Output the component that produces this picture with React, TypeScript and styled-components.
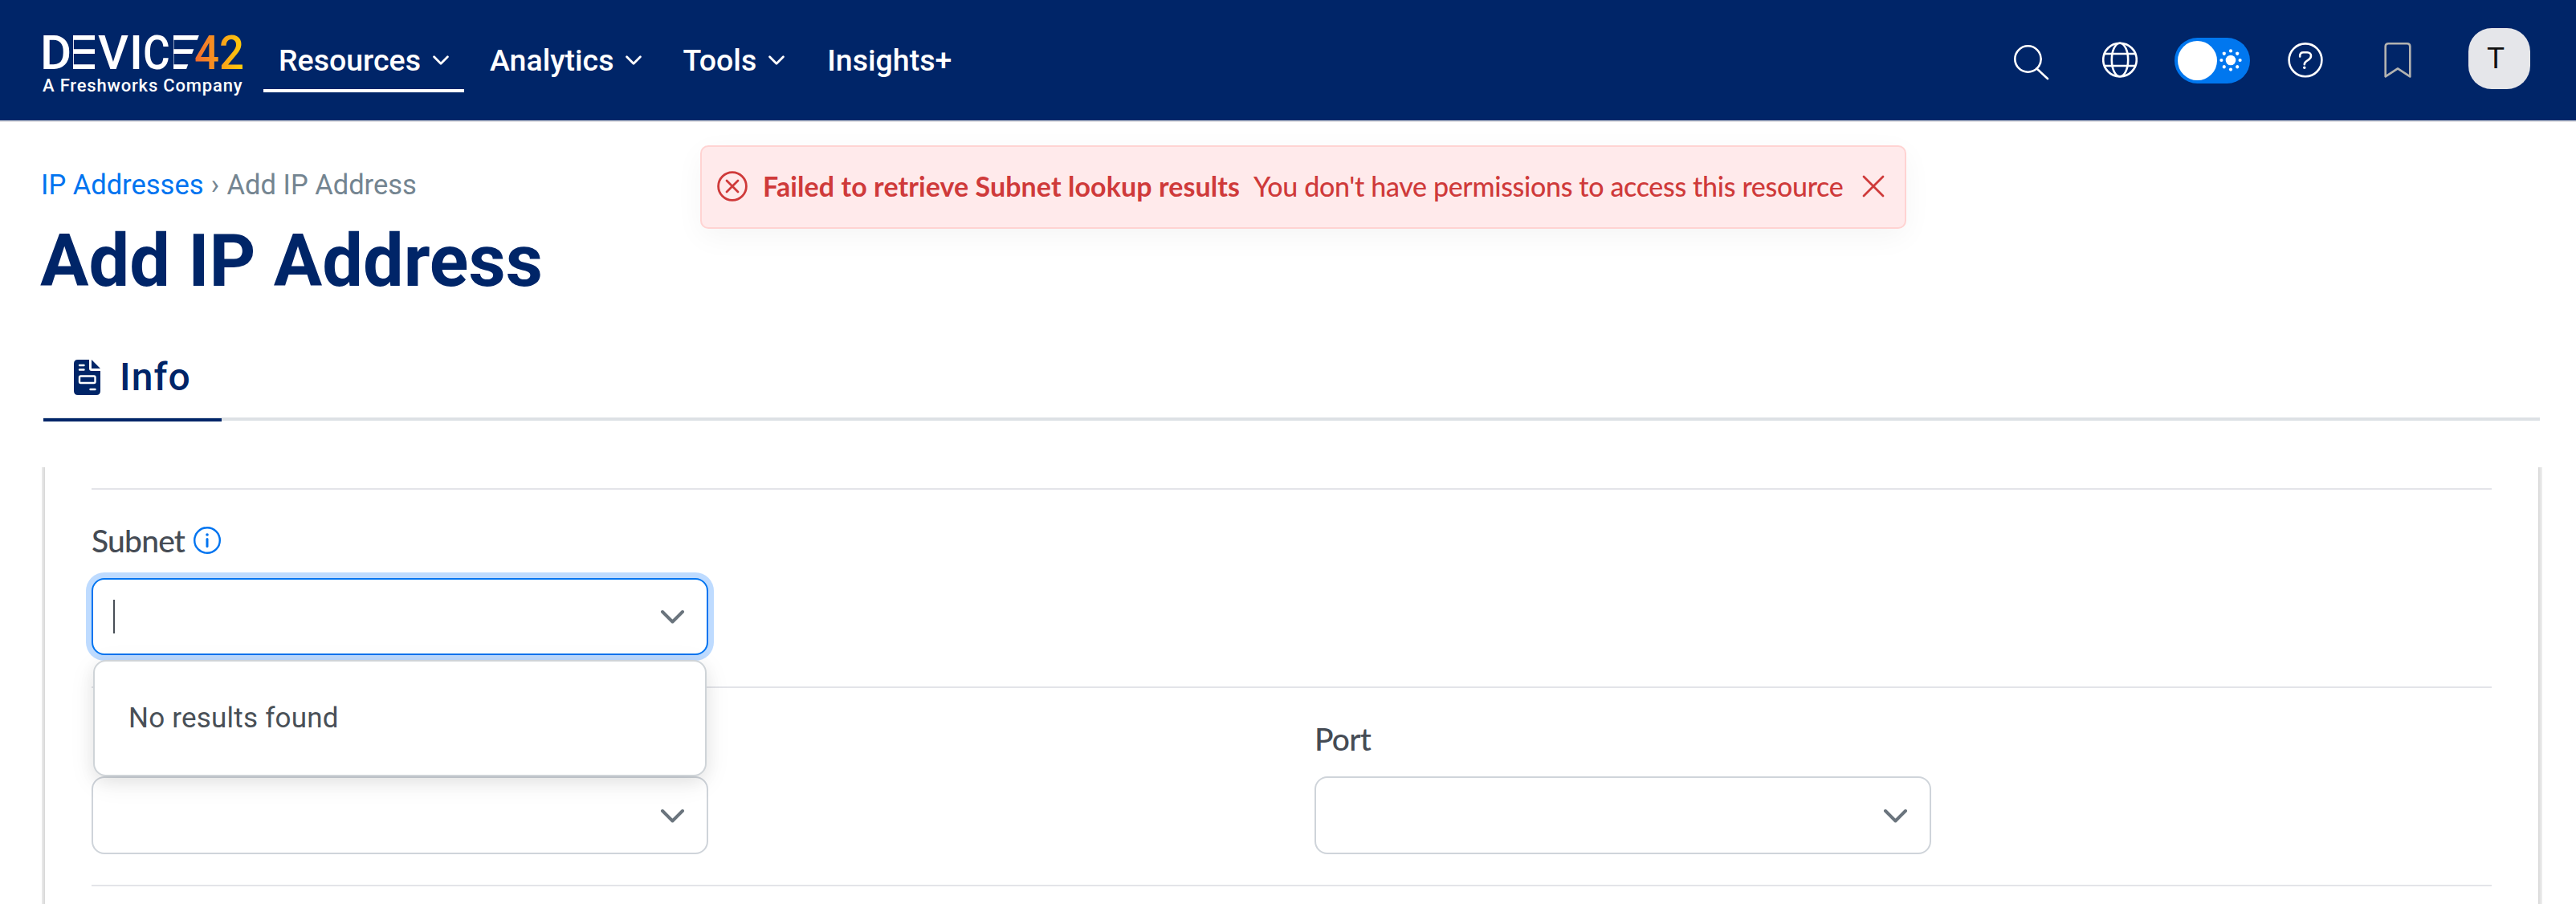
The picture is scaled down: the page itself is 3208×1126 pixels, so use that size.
import React from "react";
import styled, { createGlobalStyle, css } from "styled-components";

const navy = "#002568";
const blue = "#0074f0";
const red = "#cf3a3a";

const GlobalStyle = createGlobalStyle`
  * { box-sizing: border-box; }
  body { margin: 0; background: #fff; font-family: Roboto, "Liberation Sans", sans-serif; }
`;

const Page = styled.div`
  position: relative;
  height: 1126px;
  overflow: hidden;
`;

const Header = styled.header`
  display: flex;
  height: 152px;
  padding: 0 57px 0 52px;
  background: ${navy};
  border-bottom: 2px solid #e0e0e4;
`;

const Brand = styled.div`
  display: flex;
  flex-direction: column;
  width: 276px;
  padding-top: 41px;
`;

const Wordmark = styled.svg`
  display: block;
  width: 252px;
  height: 48px;
  overflow: visible;
  font: 500 60px Roboto, sans-serif;
  fill: #fff;
`;

const Tagline = styled.span`
  margin: 5px 0 0 1px;
  font-size: 22px;
  font-weight: 500;
  line-height: 26px;
  letter-spacing: 0.82px;
  color: #fff;
  white-space: nowrap;
`;

const Nav = styled.nav`
  display: flex;
  gap: 13px;
  padding-top: 39px;
`;

const NavItem = styled.a<{ $active?: boolean }>`
  display: flex;
  align-items: center;
  gap: 15px;
  height: 76px;
  padding: 0 19px 0 19px;
  border-bottom: 4px solid ${(p) => (p.$active ? "#fff" : "transparent")};
  color: #fff;
  font-size: 37.5px;
  font-weight: 500;
  white-space: nowrap;

  &:last-child {
    padding-left: 21px;
  }
`;

const Tools = styled.div`
  display: flex;
  align-items: center;
  height: 150px;
  margin-left: auto;
`;

const ToolIcon = styled.svg<{ $w: number; $gap: number }>`
  flex: none;
  width: ${(p) => p.$w}px;
  height: 60px;
  margin-right: ${(p) => p.$gap}px;
  fill: none;
  stroke: #fff;
  stroke-width: 2.6;
  stroke-linecap: round;
  stroke-linejoin: round;
`;

const ThemeSwitch = styled.div`
  display: flex;
  align-items: center;
  justify-content: space-between;
  width: 94px;
  height: 57px;
  margin-right: 47px;
  padding: 0 9px 0 4px;
  border-radius: 29px;
  background: #0077ef;
`;

const Knob = styled.span`
  width: 49px;
  height: 49px;
  border-radius: 50%;
  background: #fff;
`;

const Avatar = styled.div`
  display: flex;
  align-items: center;
  justify-content: center;
  width: 77px;
  height: 76px;
  margin-bottom: 4px;
  padding: 0 9px 2px 0;
  border-radius: 29px;
  background: #e5e6ea;
  color: #111;
  font-size: 37px;
`;

const Heading = styled.div`
  padding: 56px 51px 0;
`;

const Breadcrumb = styled.div`
  display: flex;
  font-size: 34.5px;
  line-height: 44px;
  color: #748591;
`;

const CrumbLink = styled.a`
  color: ${blue};
`;

const CrumbSep = styled.span`
  width: 29px;
  text-align: center;
`;

const Title = styled.h1`
  margin: 24px 0 0 -1px;
  font-size: 90px;
  font-weight: 700;
  line-height: 100px;
  color: ${navy};
`;

const TabBar = styled.div`
  display: flex;
  height: 124px;
  margin: 24px 45px 0 54px;
  border-bottom: 4px solid #dde1e5;
`;

const Tab = styled.div`
  display: flex;
  align-items: center;
  gap: 24px;
  width: 222px;
  height: 125px;
  padding: 18px 0 0 38px;
  border-bottom: 4px solid ${navy};
  color: ${navy};
  font-size: 48px;
  font-weight: 500;
  letter-spacing: 1.1px;
`;

const Viewport = styled.div`
  height: 544px;
  margin: 58px 42px 0 52px;
  overflow: hidden;
`;

const Panel = styled.div`
  height: 680px;
  margin: -20px 5px 0 4px;
  padding: 46px 58px 0;
  background: #fff;
  box-shadow: 0 0 11px rgba(0, 0, 0, 0.32);
`;

const Section = styled.section`
  display: grid;
  grid-template-columns: 1523px 1fr;
  height: 247px;
  padding-top: 38px;
  border-top: 2px solid #e3e4e9;
`;

const Field = styled.div`
  position: relative;
  width: 768px;
`;

const Label = styled.label`
  display: flex;
  align-items: center;
  gap: 10px;
  height: 50px;
  margin-bottom: 22px;
  font-family: Lato, "Liberation Sans", sans-serif;
  font-size: 39px;
  font-weight: 500;
  line-height: 50px;
  letter-spacing: -0.8px;
  color: #454b54;
`;

const Select = styled.div<{ $focused?: boolean }>`
  display: flex;
  align-items: center;
  height: 97px;
  padding: 0 26px 0 25px;
  border: 2px solid #cfd4da;
  border-radius: 16px;
  background: #fff;
  ${(p) =>
    p.$focused &&
    css`
      height: 96px;
      border-color: ${blue};
      box-shadow: 0 0 0 7px #bedbff;
    `}
`;

const Caret = styled.span`
  width: 2px;
  height: 42px;
  background: #484f57;
`;

const Arrow = styled.svg`
  width: 33px;
  height: 22px;
  margin-left: auto;
  fill: none;
  stroke: #6a747d;
  stroke-width: 4;
  stroke-linecap: round;
  stroke-linejoin: round;
`;

const Menu = styled.div`
  position: absolute;
  z-index: 2;
  top: 174px;
  left: 2px;
  display: flex;
  align-items: center;
  width: 764px;
  height: 145px;
  padding-left: 42px;
  border: 2px solid #cfd4d8;
  border-radius: 16px;
  background: #fff;
  box-shadow: 0 8px 32px rgba(0, 0, 0, 0.08), 0 6px 20px rgba(0, 0, 0, 0.06);
  color: #495057;
  font-size: 35px;
  letter-spacing: 0.22px;
`;

const Toast = styled.div`
  position: absolute;
  z-index: 3;
  top: 181px;
  left: 872px;
  display: flex;
  align-items: center;
  width: 1502px;
  height: 104px;
  padding: 0 25px 3px 19px;
  border: 2px solid #ffd3d2;
  border-radius: 10px;
  background: #ffeaeb;
  box-shadow: 0 10px 36px rgba(0, 0, 0, 0.045);
  color: ${red};
  font-family: Lato, "Liberation Sans", sans-serif;
  font-size: 34px;
  white-space: nowrap;
`;

const ToastTitle = styled.strong`
  margin: 0 17px 0 19px;
  font-weight: 700;
  letter-spacing: 0.08px;
`;

const ToastText = styled.span`
  font-weight: 500;
  letter-spacing: -0.34px;
`;

const ToastIcon = styled.svg<{ $size: number; $push?: boolean }>`
  flex: none;
  width: ${(p) => p.$size}px;
  height: ${(p) => p.$size}px;
  margin-left: ${(p) => (p.$push ? "auto" : 0)};
  fill: none;
  stroke: ${red};
  stroke-width: 2.8;
  stroke-linecap: round;
`;

const NavChevron = () => (
  <svg width="20" height="12" viewBox="0 0 20 12" fill="none" stroke="#fff" strokeWidth="2.8" strokeLinecap="round" strokeLinejoin="round">
    <path d="M1.6 1.8 10 10.2 18.4 1.8" />
  </svg>
);

const Logo = () => (
  <Wordmark viewBox="52 41 252 48">
    <defs>
      <linearGradient id="fourtwo" gradientUnits="userSpaceOnUse" x1="242" y1="0" x2="303" y2="0">
        <stop offset="0" stopColor="#f26a30" />
        <stop offset="0.55" stopColor="#f9a01b" />
        <stop offset="1" stopColor="#ffcd08" />
      </linearGradient>
      <clipPath id="e1"><path d="M91 40H118V90H91Z" /></clipPath>
      <clipPath id="e2"><path d="M216 40H249.3L230.6 90H216Z" /></clipPath>
    </defs>
    <text x="50" y="86">D</text>
    <g clipPath="url(#e1)"><text transform="translate(73.4 86) scale(1.57 1)">E</text></g>
    <text transform="translate(122 86) scale(.98 1)">V</text>
    <text x="161" y="86">I</text>
    <text transform="translate(178 86) scale(.86 1)">C</text>
    <g clipPath="url(#e2)"><text transform="translate(197 86) scale(1.67 1)">E</text></g>
    <g fill="url(#fourtwo)">
      <text x="242" y="86" textLength="31" lengthAdjust="spacingAndGlyphs">4</text>
      <text x="273" y="86" textLength="31" lengthAdjust="spacingAndGlyphs">2</text>
    </g>
  </Wordmark>
);

const SelectArrow = () => (
  <Arrow viewBox="0 0 33 22"><path d="M4 5 16.5 17.5 29 5" /></Arrow>
);

const sunRays = [0, 45, 90, 135, 180, 225, 270, 315];

export default function App() {
  return (
    <Page>
      <GlobalStyle />
      <Header>
        <Brand>
          <Logo />
          <Tagline>A Freshworks Company</Tagline>
        </Brand>
        <Nav>
          <NavItem $active>Resources<NavChevron /></NavItem>
          <NavItem>Analytics<NavChevron /></NavItem>
          <NavItem>Tools<NavChevron /></NavItem>
          <NavItem>Insights+</NavItem>
        </Nav>
        <Tools>
          <ToolIcon $w={44} $gap={66} viewBox="0 0 44 60">
            <circle cx="17.5" cy="28.5" r="16.2" />
            <path d="M28.5 40.5 42 53" />
          </ToolIcon>
          <ToolIcon $w={44} $gap={46} viewBox="0 0 44 60">
            <circle cx="22" cy="29.5" r="20.8" />
            <ellipse cx="22" cy="29.5" rx="10.2" ry="20.8" />
            <path d="M3 22H41M3 37H41" />
          </ToolIcon>
          <ThemeSwitch>
            <Knob />
            <svg width="30" height="30" viewBox="-15 -15 30 30" fill="#fff">
              <circle r="6.3" />
              {sunRays.map((a) => (
                <circle key={a} cx="11.6" r="2.1" transform={`rotate(${a})`} />
              ))}
            </svg>
          </ThemeSwitch>
          <ToolIcon $w={44} $gap={76} viewBox="0 0 44 60">
            <circle cx="22" cy="29.8" r="20.4" />
            <path d="M15.2 25.5V24.5C15.2 21.7 17 20.2 19.5 20.2H24.2C27 20.2 29 22 29 24.6C29 27 27.8 28.2 26 29.4L23.6 31C21.6 32.3 20.8 33.2 20.8 35.3" />
            <circle cx="20.8" cy="39.3" r="1" fill="#fff" strokeWidth="1.6" />
          </ToolIcon>
          <ToolIcon $w={34} $gap={71} viewBox="0 0 34 60">
            <path stroke="#b3b3b0" d="M1.7 50.4V13Q1.7 9.3 5.4 9.3H28.6Q32.3 9.3 32.3 13V50.4L17 40.3Z" />
          </ToolIcon>
          <Avatar>T</Avatar>
        </Tools>
      </Header>

      <Heading>
        <Breadcrumb>
          <CrumbLink>IP Addresses</CrumbLink>
          <CrumbSep>›</CrumbSep>
          <span>Add IP Address</span>
        </Breadcrumb>
        <Title>Add IP Address</Title>
      </Heading>

      <TabBar>
        <Tab>
          <svg width="33" height="44" viewBox="0 0 33 44">
            <path fill={navy} d="M5 0H19V11Q19 14 22 14H33V39Q33 44 28 44H5Q0 44 0 39V5Q0 0 5 0ZM22 0 33 11H22Z" />
            <g fill="none" stroke="#fff" strokeWidth="2.4" strokeLinecap="round" strokeLinejoin="round">
              <path d="M7 7H12.5M7 12.5H12.5M20.5 37H26.5" />
              <rect x="7" y="20.5" width="19.5" height="8.5" rx="1.5" />
            </g>
          </svg>
          Info
        </Tab>
      </TabBar>

      <Viewport>
        <Panel>
          <Section>
            <Field>
              <Label>
                Subnet
                <svg width="36" height="36" viewBox="0 0 36 36" fill="none" stroke={blue} strokeWidth="2.4" strokeLinecap="round">
                  <circle cx="18" cy="18" r="15.8" />
                  <path d="M18 16.5V25.5" strokeWidth="3" />
                  <circle cx="18" cy="11" r="1.8" fill={blue} stroke="none" />
                </svg>
              </Label>
              <Select $focused>
                <Caret />
                <SelectArrow />
              </Select>
              <Menu>No results found</Menu>
            </Field>
          </Section>
          <Section>
            <Field>
              <Label />
              <Select><SelectArrow /></Select>
            </Field>
            <Field>
              <Label>Port</Label>
              <Select><SelectArrow /></Select>
            </Field>
          </Section>
          <Section />
        </Panel>
      </Viewport>

      <Toast role="alert">
        <ToastIcon $size={38} viewBox="0 0 38 38">
          <circle cx="19" cy="19" r="17.4" />
          <path d="M12 12 26 26M26 12 12 26" />
        </ToastIcon>
        <ToastTitle>Failed to retrieve Subnet lookup results</ToastTitle>
        <ToastText>You don't have permissions to access this resource</ToastText>
        <ToastIcon $size={28} $push viewBox="0 0 28 28">
          <path d="M2 2 26 26M26 2 2 26" />
        </ToastIcon>
      </Toast>
    </Page>
  );
}
